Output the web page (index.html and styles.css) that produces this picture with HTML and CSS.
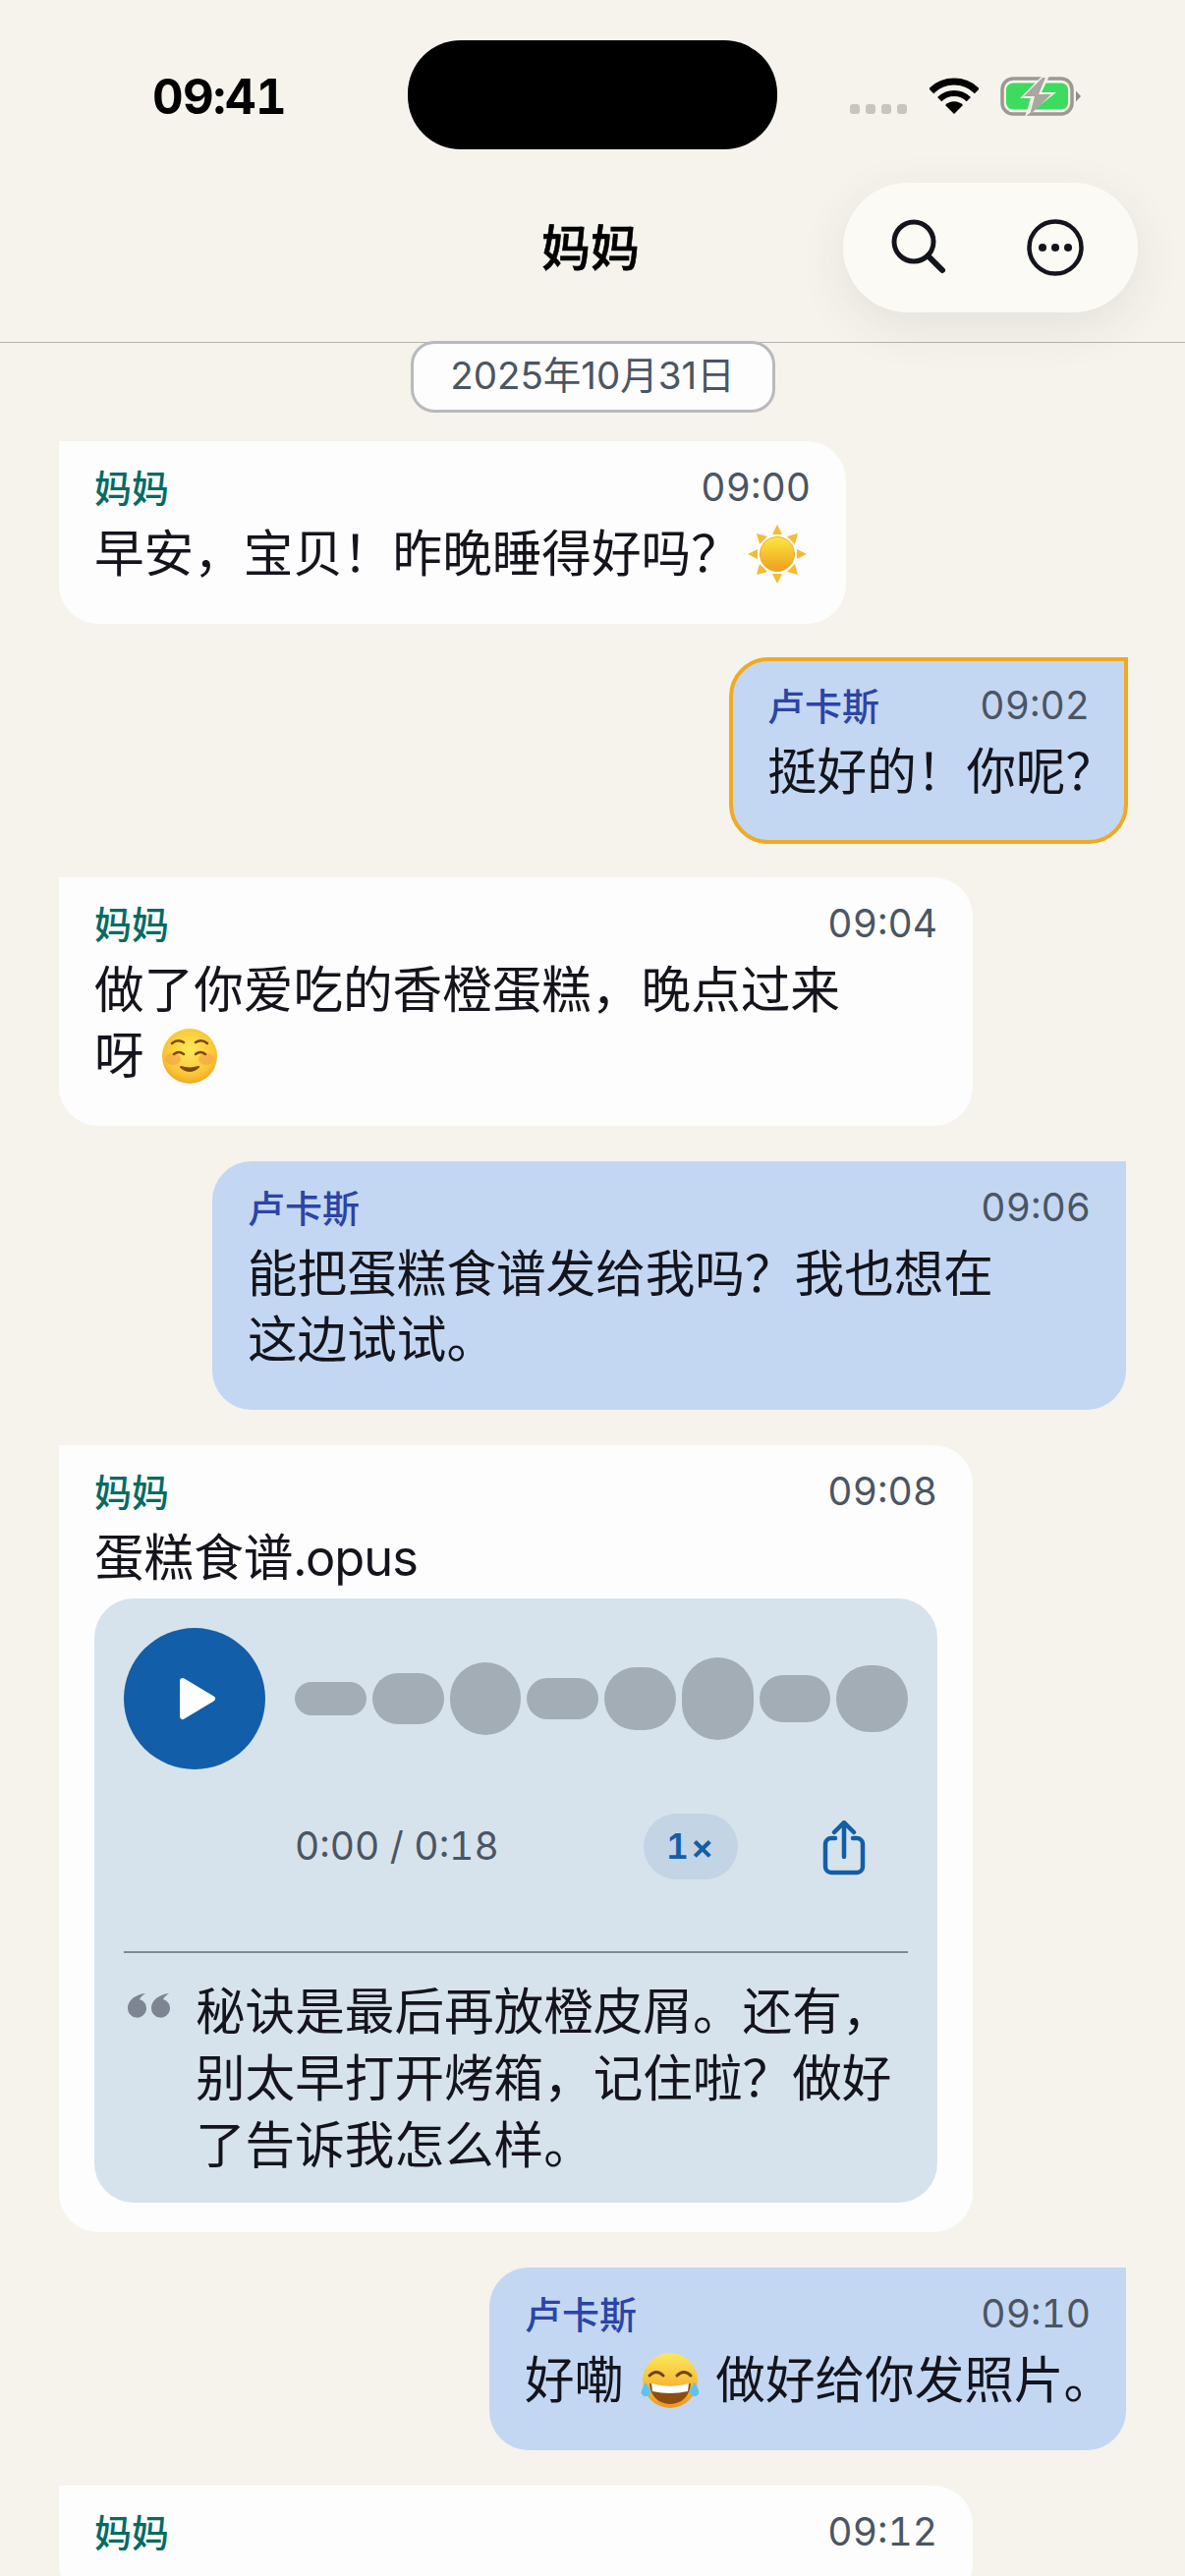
FILE: index.html
```html
<!DOCTYPE html>
<html lang="zh-CN"><head><title>妈妈</title><meta charset="utf-8"><link rel="stylesheet" href="styles.css"></head>
<body>
<div class="phone">

<header class="top">
	<div class="status">
		<div class="clock">09:41</div>
		<div class="island"></div>
		<div class="sys">
			<div class="signal"><i></i><i></i><i></i><i></i></div>
			<svg class="wifi" viewBox="0 0 50 37" width="50" height="37">
				<path d="M1.7 13.7A33 33 0 0 1 48.3 13.7" fill="none" stroke="#000" stroke-width="7"/>
				<path d="M10.15 22.15A21 21 0 0 1 39.85 22.15" fill="none" stroke="#000" stroke-width="6"/>
				<path d="M25 37L16 28A12.7 12.7 0 0 1 34 28Z" fill="#000"/>
			</svg>
			<svg class="batt" viewBox="0 0 82 40" width="82" height="40">
				<rect x="2" y="2" width="71" height="36" rx="11" fill="none" stroke="#9b9991" stroke-width="3.5"/>
				<rect x="6" y="6.500" width="63" height="27" rx="7" fill="#3ddc5f"/>
				<path d="M77 14.500L82 20L77 25.500Z" fill="#8e8c85"/>
				<path d="M43 -1L20 22H31L25 41L57 16H42L50 -1Z" fill="#f5f3ec"/>
				<path d="M43 1L24 20H35L30 39L52 18H39L46 1Z" fill="#a9a79f"/>
			</svg>
		</div>
	</div>
	<div class="nav">
		<h1 class="title">妈妈</h1>
		<div class="tools">
			<svg viewBox="0 0 58 58" width="58" height="58">
				<circle cx="23" cy="23" r="20" fill="none" stroke="#14141c" stroke-width="5"/>
				<path d="M37.500 37.500L52 52" stroke="#14141c" stroke-width="6" stroke-linecap="round"/>
			</svg>
			<svg viewBox="0 0 58 58" width="58" height="58">
				<circle cx="29" cy="29" r="26.500" fill="none" stroke="#14141c" stroke-width="4.500"/>
				<circle cx="16" cy="29" r="4" fill="#14141c"/><circle cx="29" cy="29" r="4" fill="#14141c"/><circle cx="42" cy="29" r="4" fill="#14141c"/>
			</svg>
		</div>
	</div>
</header>

<main class="chat">
	<div class="date">2025年10月31日</div>

	<div class="msg in w801">
		<div class="head"><span class="who">妈妈</span><span class="when">09:00</span></div>
		<p class="txt">早安，宝贝！昨晚睡得好吗？ <svg class="emo sunny" viewBox="0 0 60 60" width="60" height="60">
			<defs><linearGradient id="sun" x1="0" y1="0" x2="0" y2="1"><stop offset="0" stop-color="#fbe73f"/><stop offset="1" stop-color="#ee9f1d"/></linearGradient></defs>
			<g fill="#f4bb33">
				<path d="M30 0l5 10H25Z"/><path d="M30 60l-5-10H35Z"/><path d="M0 30l10-5V35Z"/><path d="M60 30l-10 5V25Z"/>
				<path d="M9 9l11 3-8 8Z"/><path d="M51 9l-3 11-8-8Z"/><path d="M9 51l3-11 8 8Z"/><path d="M51 51l-11-3 8-8Z"/>
			</g>
			<circle cx="30" cy="30" r="17.500" fill="url(#sun)" stroke="#f0a93a"/>
		</svg></p>
	</div>

	<div class="msg out mark w406">
		<div class="head"><span class="who">卢卡斯</span><span class="when">09:02</span></div>
		<p class="txt">挺好的！你呢？</p>
	</div>

	<div class="msg in wide">
		<div class="head"><span class="who">妈妈</span><span class="when">09:04</span></div>
		<p class="txt">做了你爱吃的香橙蛋糕，晚点过来<br>呀 <svg class="emo gap" viewBox="0 0 60 60" width="60" height="60">
			<defs><radialGradient id="face" cx=".5" cy=".4" r=".65"><stop offset="0" stop-color="#fde95a"/><stop offset=".7" stop-color="#f9c534"/><stop offset="1" stop-color="#ee9a1e"/></radialGradient></defs>
			<circle cx="30" cy="30" r="28" fill="url(#face)"/>
			<ellipse cx="13" cy="33" rx="8" ry="6" fill="#f59a4a" opacity=".55"/><ellipse cx="47" cy="33" rx="8" ry="6" fill="#f59a4a" opacity=".55"/>
			<g fill="none" stroke="#7a4a14" stroke-width="2.500" stroke-linecap="round">
				<path d="M12 17q6-5 12-1"/><path d="M48 17q-6-5-12-1"/><path d="M14 28q5-4 10 0"/><path d="M46 28q-5-4-10 0"/>
			</g>
			<path d="M21 41q9 8 18 0q-9 3-18 0Z" fill="#7a4a14" stroke="#7a4a14" stroke-width="2" stroke-linejoin="round"/>
		</svg></p>
	</div>

	<div class="msg out wide">
		<div class="head"><span class="who">卢卡斯</span><span class="when">09:06</span></div>
		<p class="txt">能把蛋糕食谱发给我吗？我也想在<br>这边试试。</p>
	</div>

	<div class="msg in wide">
		<div class="head"><span class="who">妈妈</span><span class="when">09:08</span></div>
		<p class="txt">蛋糕食谱<span class="lat">.opus</span></p>
		<div class="voice">
			<div class="player">
				<div class="play"><svg viewBox="0 0 40 44" width="40" height="44"><path d="M5 4L35 22L5 40Z" fill="#fff" stroke="#fff" stroke-width="6" stroke-linejoin="round"/></svg></div>
				<div class="wave">
					<i class="h34"></i><i class="h52"></i><i class="h74"></i><i class="h42"></i><i class="h64"></i><i class="h84"></i><i class="h48"></i><i class="h68"></i>
				</div>
			</div>
			<div class="ctrl">
				<span class="pos">0:00 / 0:18</span>
				<span class="speed">1×</span>
				<svg class="share" viewBox="0 0 44 56" width="44" height="56">
					<g fill="none" stroke="#125ea8" stroke-width="4.500" stroke-linecap="round" stroke-linejoin="round">
						<path d="M22 37V3M12 12L22 2L32 12"/>
						<path d="M13 18H9a6 6 0 0 0-6 6V47a6 6 0 0 0 6 6H35a6 6 0 0 0 6-6V24a6 6 0 0 0-6-6H31"/>
					</g>
				</svg>
			</div>
			<div class="transcript">
				<svg class="quo" viewBox="0 0 44 26" width="44" height="26">
					<path d="M19 1C9 2 1 8 1 16a9.500 9.500 0 1 0 12-9C14 5 16 3 19 1ZM43 1C33 2 25 8 25 16a9.500 9.500 0 1 0 12-9C38 5 40 3 43 1Z" fill="#7c8591"/>
				</svg>
				<p class="quote">秘诀是最后再放橙皮屑。还有，<br>别太早打开烤箱，记住啦？做好<br>了告诉我怎么样。</p>
			</div>
		</div>
	</div>

	<div class="msg out w648">
		<div class="head"><span class="who">卢卡斯</span><span class="when">09:10</span></div>
		<p class="txt">好嘞 <svg class="emo gap" viewBox="0 0 60 60" width="60" height="60">
			<defs><linearGradient id="laugh" x1="0" y1="0" x2="0" y2="1"><stop offset="0" stop-color="#fde95a"/><stop offset="1" stop-color="#f0981d"/></linearGradient></defs>
			<circle cx="30" cy="30" r="28" fill="url(#laugh)"/>
			<g fill="none" stroke="#6e4210" stroke-width="3" stroke-linecap="round">
				<path d="M9 25q7-7 14 0"/><path d="M37 25q7-7 14 0"/>
			</g>
			<path d="M9 33Q30 38 51 33Q49 53 30 54Q11 53 9 33Z" fill="#8a4f10"/>
			<path d="M11 33Q30 38 49 33L48 41Q30 45 12 41Z" fill="#fff"/>
			<path d="M5 32C2 37 0 41 1 44a5 5 0 0 0 9-2C10 38 7 35 5 32Z" fill="#5cc4ef"/><path d="M55 32C58 37 60 41 59 44a5 5 0 0 1-9-2C50 38 53 35 55 32Z" fill="#5cc4ef"/>
		</svg> 做好给你发照片。</p>
	</div>

	<div class="msg in wide">
		<div class="head"><span class="who">妈妈</span><span class="when">09:12</span></div>
	</div>
</main>

</div>
</body></html>
```

FILE: styles.css
```css
* { box-sizing: border-box; }
html, body { margin: 0; padding: 0; }
body { background: #f5f3ec; color: #14141c; font-family: Inter, "Noto Sans CJK SC", sans-serif; font-variant-numeric: tabular-nums; }
p, h1 { margin: 0; }
.phone { height: 2622px; overflow: hidden; }

/* top bar */
.top { position: relative; height: 349px; border-bottom: 1.5px solid #b5b3ab; }
.status { display: grid; grid-template-columns: 415px 376px 1fr; padding-top: 41px; }
.clock { padding: 28px 0 0 155px; font-size: 49px; line-height: 60px; font-weight: 700; letter-spacing: -.8px; color: #000; }
.island { height: 111px; border-radius: 54px; background: #000; }
.sys { display: flex; align-items: flex-start; padding: 37px 0 0 74px; }
.signal { display: flex; gap: 6px; margin: 28px 23px 0 0; }
.signal i { width: 10px; height: 10px; border-radius: 3px; background: #c8c5bd; }
.wifi { margin-right: 22px; margin-top: 1px; }
.title { text-align: center; font-size: 50px; line-height: 70px; font-weight: 500; color: #000; padding: 66px 4px 0 0; -webkit-text-stroke: .6px #000; }
.tools { position: absolute; top: 186px; right: 48px; width: 300px; height: 132px; border-radius: 66px; background: #fcfaf5;
	box-shadow: 0 14px 50px rgba(60,50,30,.09); display: flex; align-items: center; justify-content: space-between; padding: 0 55px 0 49px; z-index: 2; }

/* messages */
.chat { display: flex; flex-direction: column; gap: 36px; padding: 0 60px; }
.date { align-self: center; width: 371px; height: 73px; margin: -2px 0 -7px; border: 3px solid #b9b9bd; border-radius: 24px; background: #fdfdfd;
	text-align: center; font-size: 38.500px; line-height: 65px; color: #4b5563; position: relative; font-variant-numeric: normal; }
.msg { width: 930px; padding: 24px 36px 38px; border-radius: 40px; }
.msg.in { background: #fdfdfd; border-top-left-radius: 0; align-self: flex-start; }
.msg.out { background: #c3d7f2; border-top-right-radius: 0; align-self: flex-end; }
.w801 { width: 801px; }
.w648 { width: 648px; }
.w406 { width: 406px; }
.msg.mark { margin: -2px -2px -2px 0; padding: 22px 35px 36px 35px; border: 4.500px solid #efaa21; }
.msg.w801 .txt, .msg.w648 .txt, .msg.w406 .txt { white-space: nowrap; }
.head { display: flex; justify-content: space-between; align-items: center; height: 48px; margin-bottom: 9px; }
.who { font-size: 38px; font-weight: 500; margin-top: -6px; }
.in .who { color: #056b63; }
.out .who { color: #2c44a6; }
.when { font-size: 39px; color: #4b5563; margin-top: -3px; }
.txt { font-size: 50.600px; line-height: 67px; color: #14141c; }
.lat { letter-spacing: -1px; }
.emo { vertical-align: -12px; }
.gap { margin: 0 3px; }
.sunny { margin-left: -6px; }

/* voice card */
.voice { margin: 8px 0 -8px; padding: 30px 30px 24px; border-radius: 40px; background: #d7e3ec; }
.player { display: flex; align-items: center; gap: 30px; }
.play { width: 144px; height: 144px; border-radius: 50%; background: #125ea8; display: flex; align-items: center; justify-content: center; padding-left: 6px; flex: none; }
.wave { flex: 1; display: flex; align-items: center; gap: 6px; }
.wave i { flex: 1; border-radius: 999px; background: #a2adb5; }
.h34 { height: 34px; }
.h42 { height: 42px; }
.h48 { height: 48px; }
.h52 { height: 52px; }
.h64 { height: 64px; }
.h68 { height: 68px; }
.h74 { height: 74px; }
.h84 { height: 84px; }
.ctrl { display: flex; align-items: center; height: 67px; margin-top: 45px; padding-left: 174px; }
.pos { font-size: 39px; color: #4b5563; flex: 1; margin-top: -2px; }
.speed { width: 96px; height: 67px; border-radius: 34px; background: #c3d4e5; color: #125ea8; font-size: 36px; font-weight: 600; line-height: 67px; text-align: center; letter-spacing: 2px; }
.share { margin: 2px 43px 0 86px; }
.transcript { display: flex; align-items: flex-start; gap: 26px; margin-top: 73px; padding-top: 26px; border-top: 2px solid #7d8a94; }
.quo { flex: none; margin: 14px 0 0 3px; }
.quote { font-size: 50.600px; line-height: 68px; color: #14141c; white-space: nowrap; }
```
